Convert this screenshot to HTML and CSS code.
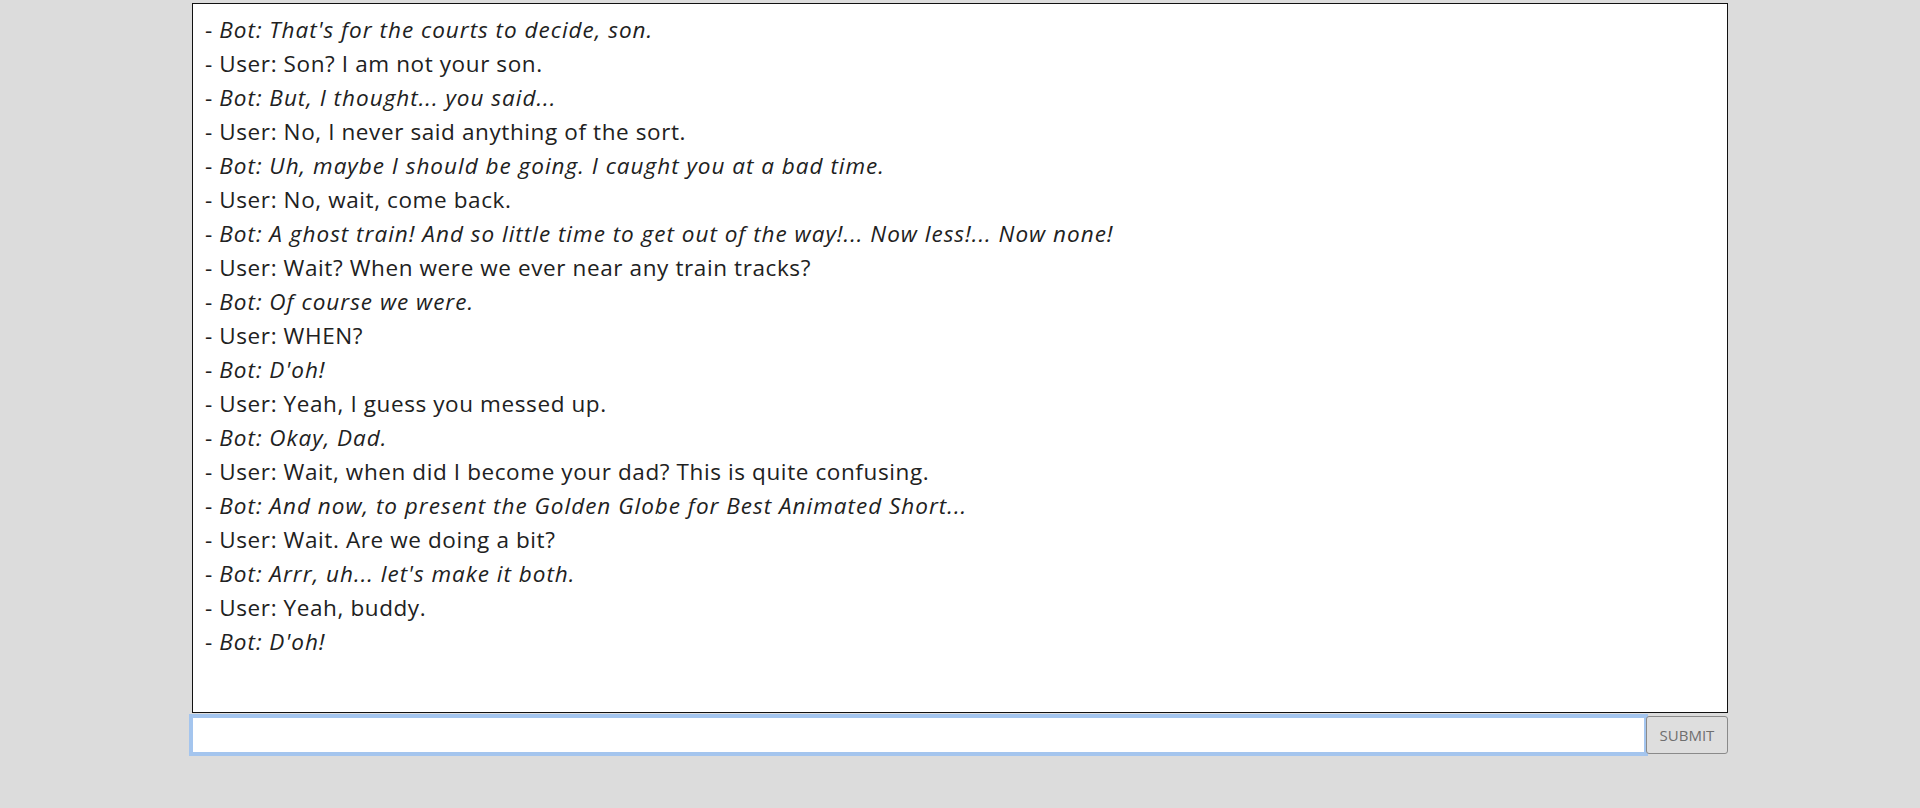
FILE: index.html
```html
<!DOCTYPE html>
<html>
<head>
<meta charset="utf-8">
<link rel="stylesheet" href="styles.css">
</head>
<body>
<div class="app">
  <div class="log">
    <div class="line bot">- <em>Bot: That's for the courts to decide, son.</em></div>
    <div class="line">- User: Son? I am not your son.</div>
    <div class="line bot">- <em>Bot: But, I thought... you said...</em></div>
    <div class="line">- User: No, I never said anything of the sort.</div>
    <div class="line bot">- <em>Bot: Uh, maybe I should be going. I caught you at a bad time.</em></div>
    <div class="line">- User: No, wait, come back.</div>
    <div class="line bot">- <em>Bot: A ghost train! And so little time to get out of the way!... Now less!... Now none!</em></div>
    <div class="line">- User: Wait? When were we ever near any train tracks?</div>
    <div class="line bot">- <em>Bot: Of course we were.</em></div>
    <div class="line">- User: WHEN?</div>
    <div class="line bot">- <em>Bot: D'oh!</em></div>
    <div class="line">- User: Yeah, I guess you messed up.</div>
    <div class="line bot">- <em>Bot: Okay, Dad.</em></div>
    <div class="line">- User: Wait, when did I become your dad? This is quite confusing.</div>
    <div class="line bot">- <em>Bot: And now, to present the Golden Globe for Best Animated Short...</em></div>
    <div class="line">- User: Wait. Are we doing a bit?</div>
    <div class="line bot">- <em>Bot: Arrr, uh... let's make it both.</em></div>
    <div class="line">- User: Yeah, buddy.</div>
    <div class="line bot">- <em>Bot: D'oh!</em></div>
  </div>
  <form class="entry">
    <input class="field" type="text">
    <button class="submit" type="button">SUBMIT</button>
  </form>
</div>
</body>
</html>
```
FILE: styles.css
```css
html, body {
  margin: 0;
  padding: 0;
  background: #dcdcdc;
}
body {
  font-family: "Open Sans", "Noto Sans", sans-serif;
  color: #212121;
}
.app {
  width: 1536px;
  margin: 3px auto 0;
  display: flex;
  flex-direction: column;
}
.log {
  box-sizing: border-box;
  height: 710px;
  background: #fff;
  border: 1px solid #111;
  padding: 9px 12px 7px;
  font-size: 22.5px;
  letter-spacing: 0.6px;
  line-height: 34px;
}
.line em {
  font-style: italic;
  letter-spacing: 1px;
}
.entry {
  display: flex;
  margin: 1px 0 0 -3px;
  align-items: flex-start;
}
.field {
  flex: 1;
  box-sizing: border-box;
  height: 42px;
  border: 4px solid #a4c5ee;
  background: #fff;
  outline: none;
  margin: 0;
}
.submit {
  box-sizing: border-box;
  width: 82px;
  height: 38px;
  margin: 2px 0 0 -2px;
  border: 1px solid #8a8a8a;
  border-radius: 3px;
  background: #dedede;
  color: #6f6f6f;
  font-family: "Open Sans", "Noto Sans", sans-serif;
  font-size: 15px;
  padding: 0;
}
```
